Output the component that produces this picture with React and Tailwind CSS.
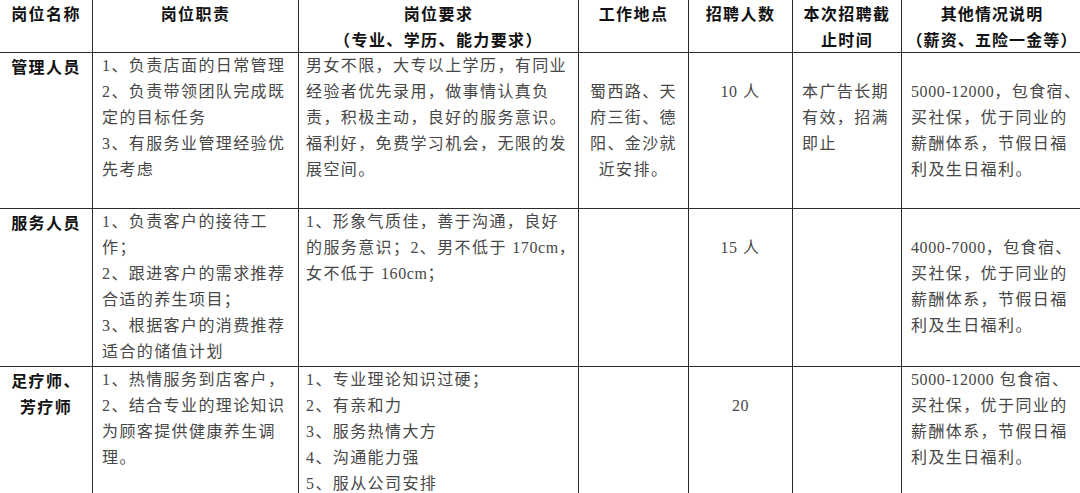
import React from 'react';

const head = "font-['Noto_Sans_CJK_SC',sans-serif] font-bold text-[#111]";
const body = "font-['Liberation_Serif','Noto_Sans_CJK_SC',serif] text-[#474747]";

function Lines({ lines }) {
  return lines.map((l, i) => (
    <div key={i} className="whitespace-nowrap">
      {l}
    </div>
  ));
}

// latin runs are a little tighter than the CJK grid
function L({ children }) {
  return <span className="tracking-[0.6px]">{children}</span>;
}

function Cell({ lines = [], className = '', last = false }) {
  return (
    <div
      className={`border-b border-[#2b2b2b] overflow-hidden ${last ? '' : 'border-r'} ${className}`}
    >
      <Lines lines={lines} />
    </div>
  );
}

const rows = [
  {
    h: 'h-[53px]',
    cells: [
      { lines: ['岗位名称'], cls: `${head} text-center` },
      { lines: ['岗位职责'], cls: `${head} text-center` },
      { lines: ['岗位要求', '（专业、学历、能力要求）'], cls: `${head} text-center` },
      { lines: ['工作地点'], cls: `${head} text-center` },
      { lines: ['招聘人数'], cls: `${head} text-center` },
      { lines: ['本次招聘截', '止时间'], cls: `${head} text-center` },
      { lines: ['其他情况说明', '（薪资、五险一金等）'], cls: `${head} text-center tracking-[1.1px]` },
    ],
  },
  {
    h: 'h-[156px]',
    cells: [
      { lines: ['管理人员'], cls: `${head} text-center` },
      {
        lines: ['1、负责店面的日常管理', '2、负责带领团队完成既', '定的目标任务', '3、有服务业管理经验优', '先考虑'],
        cls: `${body} pl-[9px]`,
      },
      {
        lines: [
          '男女不限，大专以上学历，有同业',
          '经验者优先录用，做事情认真负',
          '责，积极主动，良好的服务意识。',
          '福利好，免费学习机会，无限的发',
          '展空间。',
        ],
        cls: `${body} pl-[7px]`,
      },
      { lines: ['蜀西路、天', '府三街、德', '阳、金沙就', '近安排。'], cls: `${body} text-center pt-[26px]` },
      { lines: [<><L>10</L> 人</>], cls: `${body} text-center pt-[26px]` },
      { lines: ['本广告长期', '有效，招满', '即止'], cls: `${body} pl-[9px] pt-[26px]` },
      {
        lines: [<><L>5000-12000</L>，包食宿、</>, '买社保，优于同业的', '薪酬体系，节假日福', '利及生日福利。'],
        cls: `${body} pl-[9px] pt-[26px]`,
      },
    ],
  },
  {
    h: 'h-[158px]',
    cells: [
      { lines: ['服务人员'], cls: `${head} text-center` },
      {
        lines: ['1、负责客户的接待工', '作；', '2、跟进客户的需求推荐', '合适的养生项目；', '3、根据客户的消费推荐', '适合的储值计划'],
        cls: `${body} pl-[9px]`,
      },
      {
        lines: [
          '1、形象气质佳，善于沟通，良好',
          <>的服务意识；2、男不低于 <L>170cm</L>，</>,
          <>女不低于 <L>160cm</L>；</>,
        ],
        cls: `${body} pl-[7px]`,
      },
      { lines: [], cls: body },
      { lines: [<><L>15</L> 人</>], cls: `${body} text-center pt-[26px]` },
      { lines: [], cls: body },
      {
        lines: [<><L>4000-7000</L>，包食宿、</>, '买社保，优于同业的', '薪酬体系，节假日福', '利及生日福利。'],
        cls: `${body} pl-[9px] pt-[26px]`,
      },
    ],
  },
  {
    h: 'h-[140px]',
    cells: [
      { lines: ['足疗师、', '芳疗师'], cls: `${head} text-center` },
      {
        lines: ['1、热情服务到店客户，', '2、结合专业的理论知识', '为顾客提供健康养生调', '理。'],
        cls: `${body} pl-[9px]`,
      },
      {
        lines: ['1、专业理论知识过硬；', '2、有亲和力', '3、服务热情大方', '4、沟通能力强', '5、服从公司安排'],
        cls: `${body} pl-[7px]`,
      },
      { lines: [], cls: body },
      { lines: [<L>20</L>], cls: `${body} text-center pt-[26px]` },
      { lines: [], cls: body },
      {
        lines: [<><L>5000-12000</L> 包食宿、</>, '买社保，优于同业的', '薪酬体系，节假日福', '利及生日福利。'],
        cls: `${body} pl-[9px]`,
      },
    ],
  },
];

export default function App() {
  return (
    <div className="w-[1080px] h-[493px] overflow-hidden bg-white">
      <div className="w-[1082px] text-[16px] leading-[26px] tracking-[1.4px]">
        {rows.map((r, ri) => (
          <div
            key={ri}
            className={`grid grid-cols-[93px_206px_280px_110px_104px_109px_1fr] ${r.h}`}
          >
            {r.cells.map((c, ci) => (
              <Cell key={ci} lines={c.lines} className={c.cls} last={ci === 6} />
            ))}
          </div>
        ))}
      </div>
    </div>
  );
}
